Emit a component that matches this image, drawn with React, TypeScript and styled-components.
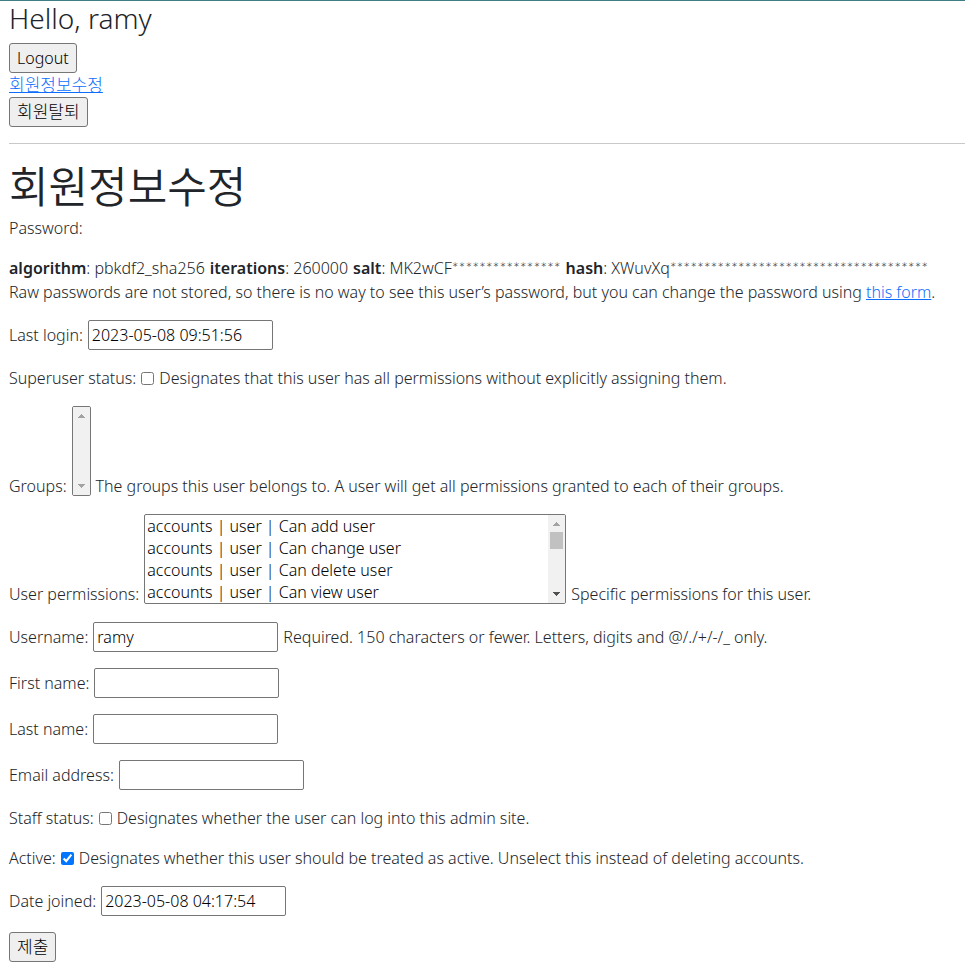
import React from 'react';
import styled, { createGlobalStyle } from 'styled-components';

const GlobalStyle = createGlobalStyle`
  *, *::before, *::after { box-sizing: border-box; }
  body {
    margin: 0;
    background: #fff;
    color: #212529;
    font-family: "Noto Sans", "Noto Sans CJK KR", sans-serif;
    font-size: 16px;
    font-weight: 300;
    line-height: 24px;
  }
  button, input, select { font: inherit; color: #000; }
`;

const Page = styled.div`
  border-top: 1px solid #3f7f83;
  padding-left: 9px;
`;

const Header = styled.header`
  display: flex;
  flex-direction: column;
  align-items: flex-start;
`;

const Greeting = styled.h3`
  margin: 0 0 8px;
  font-size: 28px;
  font-weight: 300;
  line-height: 34px;
`;

const Title = styled.h1`
  margin: 0 0 8px;
  font-family: "Noto Sans CJK KR", sans-serif;
  font-size: 43px;
  font-weight: 350;
  line-height: 48px;
`;

const Divider = styled.hr`
  margin: 16px 0;
  border: 0;
  border-top: 1px solid #c8c9ca;
`;

const Button = styled.button<{ $korean?: boolean }>`
  height: 30px;
  padding: 1px 7px;
  border: 1px solid #767676;
  border-radius: 3px;
  background: #efefef;
  font-size: ${p => (p.$korean ? '17px' : '16px')};
`;

const Link = styled.a<{ $korean?: boolean }>`
  color: #0d6efd;
  font-size: ${p => (p.$korean ? '17px' : '16px')};
  text-decoration: underline;
`;

const Form = styled.form`
  display: flex;
  flex-direction: column;
  align-items: flex-start;
  gap: 16px;
`;

const Row = styled.div<{ $list?: boolean }>`
  display: flex;
  align-items: ${p => (p.$list ? 'flex-end' : 'center')};
  gap: 5px;
  white-space: nowrap;
`;

const PasswordInfo = styled.div`
  strong { font-weight: 600; }
`;

const Summary = styled.div`
  display: flex;
  gap: 5px;
  white-space: nowrap;
`;

const Mask = styled.span`
  font-family: Lato, sans-serif;
`;

const TextInput = styled.input`
  width: 185px;
  height: 30px;
  padding: 1px 3px;
  border: 1px solid #767676;
  border-radius: 2px;
  background: #fff;
`;

const Checkbox = styled.input`
  width: 13px;
  height: 13px;
  margin: 0;
`;

const ListBox = styled.div<{ $empty: boolean }>`
  display: flex;
  width: ${p => (p.$empty ? '19px' : '422px')};
  height: 90px;
  margin-bottom: 2px;
  border: 1px solid #767676;
  border-radius: 2px;
  background: #fff;
  overflow: hidden;
`;

const List = styled.select`
  flex: 1;
  min-width: 0;
  height: 88px;
  padding: 0;
  border: 0;
  background: transparent;
  outline: none;
  scrollbar-width: none;

  option {
    min-height: 22px;
    padding: 0 2px;
    font-weight: 300;
    line-height: 22px;
  }
`;

const ScrollBar = styled.div`
  display: flex;
  flex: none;
  flex-direction: column;
  justify-content: space-between;
  width: 17px;
  background: #f1f1f1;
`;

const ScrollArrow = styled.svg<{ $active?: boolean }>`
  display: block;
  width: 17px;
  height: 17px;
  fill: ${p => (p.$active ? '#505050' : '#a3a3a3')};
`;

const Thumb = styled.div`
  height: 17px;
  margin: 0 2px auto;
  background: #c1c1c1;
`;

const models = [
  'accounts | user',
  'admin | log entry',
  'auth | group',
  'auth | permission',
  'contenttypes | content type',
  'sessions | session',
];
const permissions = models.flatMap(model =>
  ['add', 'change', 'delete', 'view'].map(action => `${model} | Can ${action} ${model.split(' | ')[1]}`),
);

function TextField({ id, label, value = '', help }: { id: string; label: string; value?: string; help?: string }) {
  return (
    <Row>
      <label htmlFor={id}>{label}:</label>
      <TextInput type="text" id={id} name={id} defaultValue={value} />
      {help && <span>{help}</span>}
    </Row>
  );
}

function CheckField({ id, label, checked = false, help }: { id: string; label: string; checked?: boolean; help: string }) {
  return (
    <Row>
      <label htmlFor={id}>{label}:</label>
      <Checkbox type="checkbox" id={id} name={id} defaultChecked={checked} />
      <span>{help}</span>
    </Row>
  );
}

function ListField({ id, label, options, help }: { id: string; label: string; options: string[]; help: string }) {
  const empty = options.length === 0;
  return (
    <Row $list>
      <label htmlFor={id}>{label}:</label>
      <ListBox $empty={empty}>
        <List id={id} name={id} multiple>
          {options.map(option => <option key={option}>{option}</option>)}
        </List>
        <ScrollBar aria-hidden="true">
          <ScrollArrow viewBox="0 0 17 17" shapeRendering="crispEdges">
            <path d="M8 7h1v1h1v1h1v1h1v1H5v-1h1V9h1V8h1z" />
          </ScrollArrow>
          {!empty && <Thumb />}
          <ScrollArrow $active={!empty} viewBox="0 0 17 17" shapeRendering="crispEdges">
            <path d="M5 6h7v1h-1v1h-1v1H9v1H8V9H7V8H6V7H5z" />
          </ScrollArrow>
        </ScrollBar>
      </ListBox>
      <span>{help}</span>
    </Row>
  );
}

export default function App() {
  return (
    <Page>
      <GlobalStyle />
      <Header>
        <Greeting>Hello, ramy</Greeting>
        <Button type="button">Logout</Button>
        <Link $korean href="#update">회원정보수정</Link>
        <Button $korean type="button">회원탈퇴</Button>
      </Header>
      <Divider />
      <Title id="update">회원정보수정</Title>
      <Form onSubmit={e => e.preventDefault()}>
        <div>Password:</div>
        <PasswordInfo>
          <Summary>
            <span><strong>algorithm</strong>: pbkdf2_sha256</span>
            <span><strong>iterations</strong>: 260000</span>
            <span><strong>salt</strong>: MK2wCF<Mask>{'*'.repeat(16)}</Mask></span>
            <span><strong>hash</strong>: XWuvXq<Mask>{'*'.repeat(38)}</Mask></span>
          </Summary>
          Raw passwords are not stored, so there is no way to see this user’s password, but you can change the password using{' '}
          <Link href="#password">this form</Link>.
        </PasswordInfo>
        <TextField id="last_login" label="Last login" value="2023-05-08 09:51:56" />
        <CheckField
          id="is_superuser"
          label="Superuser status"
          help="Designates that this user has all permissions without explicitly assigning them."
        />
        <ListField
          id="groups"
          label="Groups"
          options={[]}
          help="The groups this user belongs to. A user will get all permissions granted to each of their groups."
        />
        <ListField
          id="user_permissions"
          label="User permissions"
          options={permissions}
          help="Specific permissions for this user."
        />
        <TextField
          id="username"
          label="Username"
          value="ramy"
          help="Required. 150 characters or fewer. Letters, digits and @/./+/-/_ only."
        />
        <TextField id="first_name" label="First name" />
        <TextField id="last_name" label="Last name" />
        <TextField id="email" label="Email address" />
        <CheckField
          id="is_staff"
          label="Staff status"
          help="Designates whether the user can log into this admin site."
        />
        <CheckField
          id="is_active"
          label="Active"
          checked
          help="Designates whether this user should be treated as active. Unselect this instead of deleting accounts."
        />
        <TextField id="date_joined" label="Date joined" value="2023-05-08 04:17:54" />
        <Button $korean type="submit">제출</Button>
      </Form>
    </Page>
  );
}
